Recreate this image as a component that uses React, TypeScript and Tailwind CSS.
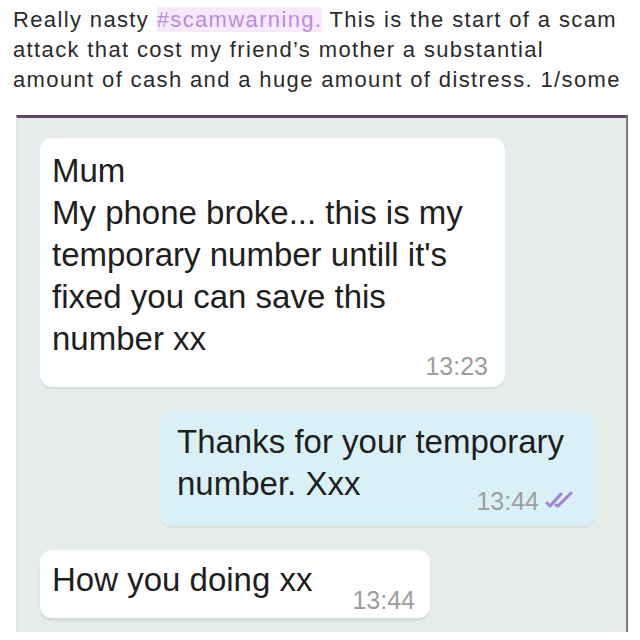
function Ticks() {
  return (
    <svg width="36" height="18" viewBox="0 0 36 18" className="ml-[5px] mb-[2px]">
      <path d="M3 12 L6 15 L17 3" fill="none" stroke="#a27fd6" strokeWidth="3" strokeLinecap="round" strokeLinejoin="round" />
      <path d="M12 14 L14 15 L27 2" fill="none" stroke="#a27fd6" strokeWidth="3" strokeLinecap="round" strokeLinejoin="round" />
    </svg>
  )
}

function Time({ children }: { children: string }) {
  return <span className="text-[25px] leading-[28px] text-[#9d9d9d]">{children}</span>
}

export default function App() {
  return (
    <div className="w-[640px] h-[640px] bg-white overflow-hidden font-['Liberation_Sans',Arial,sans-serif]">
      <div className="pl-[13px] pt-[5px] text-[22px] leading-[30px] tracking-[0.062em] text-[#2a2a2a] whitespace-nowrap">
        <div>
          Really nasty{' '}
          <span className="text-[#b98be2] bg-[#f6eafa]">#scamwarning.</span> This is the start of a scam
        </div>
        <div>attack that cost my friend’s mother a substantial</div>
        <div>amount of cash and a huge amount of distress. 1/some</div>
      </div>

      <div className="mt-[20px] ml-[16px] w-[612px] border-t-[3px] border-t-[#5e4b5e] border-r-2 border-r-[#7c7c7c] border-l border-l-[#dfe6e0] bg-[#e6ede8] pt-[20px] pl-[23px] pb-[14px] flex flex-col gap-[24px] text-[#1e1e1e]">
        <div className="w-[465px] bg-white rounded-[12px] pt-[12px] pl-[12px] pr-[17px] pb-[7px] shadow-[0_2px_1px_rgba(0,0,0,0.07)]">
          <div className="text-[33px] leading-[42px] whitespace-nowrap">
            <div>Mum</div>
            <div>My phone broke... this is my</div>
            <div>temporary number untill it's</div>
            <div>fixed you can save this</div>
            <div>number xx</div>
          </div>
          <div className="-mt-[8px] flex justify-end">
            <Time>13:23</Time>
          </div>
        </div>

        <div className="ml-[120px] w-[435px] bg-[#d9f1f6] rounded-[12px] pt-[10px] pl-[17px] pr-[15px] pb-[11px] shadow-[0_2px_1px_rgba(0,0,0,0.06)]">
          <div className="text-[33px] leading-[42px] whitespace-nowrap">
            <div>Thanks for your temporary</div>
            <div>number. Xxx</div>
          </div>
          <div className="-mt-[18px] flex justify-end items-center">
            <Time>13:44</Time>
            <Ticks />
          </div>
        </div>

        <div className="w-[390px] bg-white rounded-[12px] pt-[9px] pl-[12px] pr-[15px] pb-[17px] flex items-end shadow-[0_3px_2px_rgba(0,0,0,0.08)]">
          <div className="text-[33px] leading-[42px] whitespace-nowrap">How you doing xx</div>
          <div className="ml-auto -mb-[15px]">
            <Time>13:44</Time>
          </div>
        </div>
      </div>
    </div>
  )
}
